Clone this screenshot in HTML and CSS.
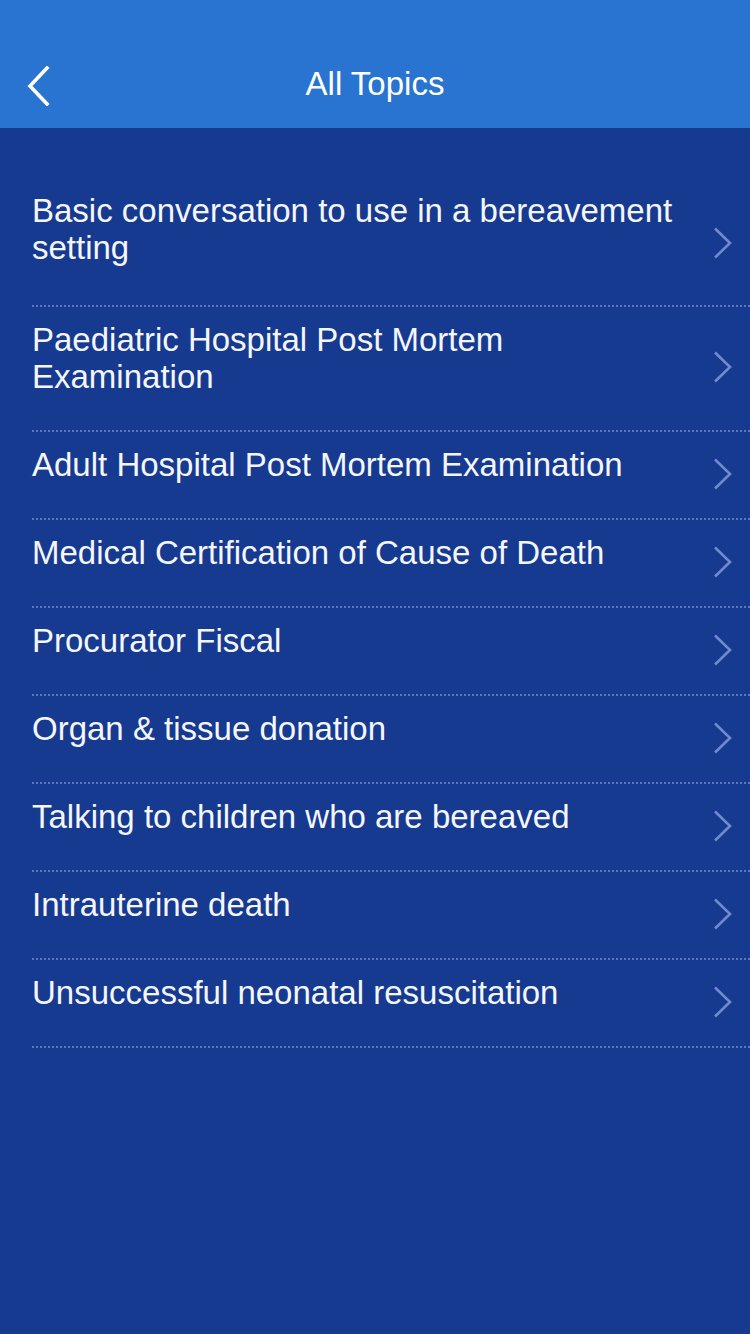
FILE: index.html
```html
<!DOCTYPE html>
<html>
<head>
<meta charset="utf-8">
<link rel="stylesheet" href="styles.css">
</head>
<body>
<div class="screen">
  <header class="navbar">
    <button class="back" aria-label="Back">
      <svg width="24" height="40" viewBox="0 0 24 40"><path d="M21 2 L4 20 L21 38" fill="none" stroke="#fff" stroke-width="3.6" stroke-linecap="square" stroke-linejoin="miter"/></svg>
    </button>
    <h1 class="title">All Topics</h1>
  </header>
  <ul class="list">
    <li class="item"><span class="label">Basic conversation to use in a bereavement setting</span><svg class="chev" width="20" height="32" viewBox="0 0 20 32"><path d="M2 1.5 L17 16 L2 30.5" fill="none" stroke="#6f8bcc" stroke-width="2.6"/></svg></li>
    <li class="item"><span class="label">Paediatric Hospital Post Mortem Examination</span><svg class="chev" width="20" height="32" viewBox="0 0 20 32"><path d="M2 1.5 L17 16 L2 30.5" fill="none" stroke="#6f8bcc" stroke-width="2.6"/></svg></li>
    <li class="item"><span class="label">Adult Hospital Post Mortem Examination</span><svg class="chev" width="20" height="32" viewBox="0 0 20 32"><path d="M2 1.5 L17 16 L2 30.5" fill="none" stroke="#6f8bcc" stroke-width="2.6"/></svg></li>
    <li class="item"><span class="label">Medical Certification of Cause of Death</span><svg class="chev" width="20" height="32" viewBox="0 0 20 32"><path d="M2 1.5 L17 16 L2 30.5" fill="none" stroke="#6f8bcc" stroke-width="2.6"/></svg></li>
    <li class="item"><span class="label">Procurator Fiscal</span><svg class="chev" width="20" height="32" viewBox="0 0 20 32"><path d="M2 1.5 L17 16 L2 30.5" fill="none" stroke="#6f8bcc" stroke-width="2.6"/></svg></li>
    <li class="item"><span class="label">Organ &amp; tissue donation</span><svg class="chev" width="20" height="32" viewBox="0 0 20 32"><path d="M2 1.5 L17 16 L2 30.5" fill="none" stroke="#6f8bcc" stroke-width="2.6"/></svg></li>
    <li class="item"><span class="label">Talking to children who are bereaved</span><svg class="chev" width="20" height="32" viewBox="0 0 20 32"><path d="M2 1.5 L17 16 L2 30.5" fill="none" stroke="#6f8bcc" stroke-width="2.6"/></svg></li>
    <li class="item"><span class="label">Intrauterine death</span><svg class="chev" width="20" height="32" viewBox="0 0 20 32"><path d="M2 1.5 L17 16 L2 30.5" fill="none" stroke="#6f8bcc" stroke-width="2.6"/></svg></li>
    <li class="item"><span class="label">Unsuccessful neonatal resuscitation</span><svg class="chev" width="20" height="32" viewBox="0 0 20 32"><path d="M2 1.5 L17 16 L2 30.5" fill="none" stroke="#6f8bcc" stroke-width="2.6"/></svg></li>
  </ul>
</div>
</body>
</html>
```
FILE: styles.css
```css
html, body {
  margin: 0;
  padding: 0;
  background: #173a91;
}
body {
  font-family: "Liberation Sans", Arial, sans-serif;
  color: #f4f6fb;
}
.screen {
  width: 750px;
  height: 1334px;
  background: #173a91;
  overflow: hidden;
}
.navbar {
  height: 128px;
  background: #2874d0;
  position: relative;
  display: flex;
  align-items: center;
  justify-content: center;
  padding-top: 40px;
  box-sizing: border-box;
}
.back {
  position: absolute;
  left: 26px;
  top: 66px;
  background: none;
  border: 0;
  padding: 0;
  margin: 0;
  width: 24px;
  height: 40px;
}
.back svg { display: block; }
.title {
  margin: 0;
  font-size: 33px;
  font-weight: normal;
  color: #fff;
  line-height: 40px;
}
.list {
  list-style: none;
  margin: 0;
  padding: 55px 0 0 0;
}
.item {
  position: relative;
  display: flex;
  align-items: center;
  padding: 0 17px 0 32px;
  font-size: 33px;
  line-height: 36.5px;
}
.item::after {
  content: "";
  position: absolute;
  left: 32px;
  right: 0;
  bottom: 0;
  height: 2px;
  background: repeating-linear-gradient(to right, #5a78be 0 2px, transparent 2px 4px);
}
.label {
  flex: 1;
  padding: 15px 30px 36.5px 0;
}
.item:first-child .label {
  padding-top: 10px;
  padding-bottom: 41px;
}
.chev {
  flex: none;
  display: block;
  margin-top: -4px;
}
```
